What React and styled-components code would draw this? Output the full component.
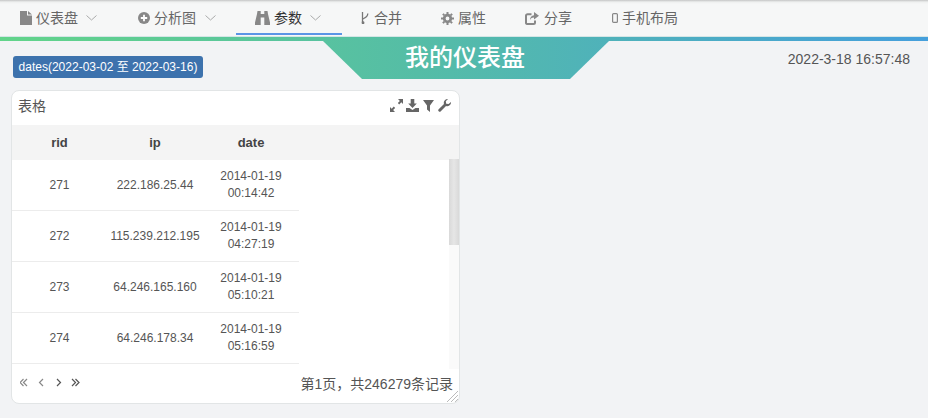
import React from 'react'
import styled, { createGlobalStyle } from 'styled-components'

const FONT = `"Liberation Sans", "Noto Sans CJK SC", sans-serif`
const GRADIENT = 'linear-gradient(90deg, #62d48a 0%, #55bda6 45%, #459fdc 100%)'

const GlobalStyle = createGlobalStyle`
  html, body { margin: 0; padding: 0; background: #f2f3f5; }
  body { font-family: ${FONT}; color: #555; width: 928px; height: 418px; overflow: hidden; }
`

const Nav = styled.nav`
  height: 36px;
  box-sizing: border-box;
  padding-top: 3px;
  display: flex;
  background: linear-gradient(180deg, #c4c5c5 0, #eef0ef 2px, #f6f7f7 4px);
`

const NavItem = styled.div`
  width: ${p => p.$w}px;
  flex: none;
  box-sizing: border-box;
  height: 32px;
  padding-left: ${p => p.$pl}px;
  padding-bottom: 2px;
  display: flex;
  align-items: center;
  gap: ${p => p.$gap ?? 4}px;
  font-size: 14px;
  color: ${p => (p.$active ? '#333' : '#666')};
  border-bottom: 2px solid ${p => (p.$active ? '#5b95e6' : 'transparent')};
  svg { flex: none; margin-top: 2px; }
`

const Caret = styled.svg`
  width: 11px;
  height: 6px;
  margin-left: ${p => p.$ml}px;
  fill: none;
  stroke: #aaa;
  stroke-width: 1;
`

const Strip = styled.div`
  height: 5px;
  background: ${GRADIENT};
  border-top: 1px solid #d5e6e6;
  box-sizing: border-box;
`

const Head = styled.header`
  display: grid;
  grid-template-columns: 323px 286px 1fr;
  height: 49px;
`

const Tag = styled.div`
  align-self: start;
  justify-self: start;
  margin: 15px 0 0 13px;
  height: 22px;
  width: 190px;
  box-sizing: border-box;
  background: #3d72ad;
  border-radius: 3px;
  color: #fff;
  font-size: 12px;
  line-height: 22px;
  text-align: center;
  white-space: nowrap;
`

const Banner = styled.h1`
  margin: 0;
  height: 38px;
  background: ${GRADIENT};
  background-size: 928px 100%;
  background-position: -323px 0;
  clip-path: polygon(0 0, 286px 0, 247px 100%, 39px 100%);
  color: #fff;
  font-size: 24px;
  font-weight: 500;
  line-height: 33px;
  text-align: center;
  padding-right: 2px;
  box-sizing: border-box;
`

const Clock = styled.div`
  justify-self: end;
  margin: 9px 18px 0 0;
  font-size: 14px;
  line-height: 18px;
  color: #555;
`

const Panel = styled.section`
  width: 449px;
  height: 314px;
  margin-left: 11px;
  box-sizing: border-box;
  background: #fff;
  border: 1px solid #e2e5e6;
  border-radius: 8px;
  overflow: hidden;
  display: flex;
  flex-direction: column;
`

const PanelTop = styled.div`
  height: 34px;
  flex: none;
  box-sizing: border-box;
  display: flex;
  align-items: center;
  justify-content: space-between;
  padding: 0 7px 7px 6px;
  font-size: 14px;
  color: #555;
`

const Tools = styled.div`
  display: flex;
  gap: 3px;
  margin: 0 1px -2px 0;
  svg { width: 13px; height: 13px; fill: #666; display: block; }
`

const Columns = styled.div`
  display: grid;
  grid-template-columns: 95px 96px 96px;
  width: 287px;
`

const HeadRow = styled.div`
  height: 35px;
  flex: none;
  background: #f4f4f4;
`

const Th = styled.div`
  height: 35px;
  line-height: 36px;
  text-align: center;
  font-size: 13px;
  font-weight: bold;
  color: #444;
`

const Body = styled.div`
  height: 204px;
  flex: none;
  display: flex;
  justify-content: space-between;
`

const Rows = styled.div`
  width: 287px;
`

const Row = styled(Columns)`
  height: 51px;
  box-sizing: border-box;
  border-bottom: 1px solid #ececec;
  align-items: center;
  text-align: center;
  font-size: 12px;
  line-height: 17px;
  color: #555;
`

const Track = styled.div`
  width: 10px;
  height: 210px;
  margin-top: -1px;
  background: #fafafa;
`

const Thumb = styled.div`
  height: 86px;
  background: linear-gradient(90deg, #d9d9d9, #e6e6e6 50%, #d9d9d9);
`

const Foot = styled.div`
  flex: 1;
  display: flex;
  align-items: center;
  justify-content: space-between;
  padding: 0 6px 2px 8px;
  position: relative;
  font-size: 14px;
  color: #555;
`

const Pager = styled.div`
  display: flex;
  gap: 8px;
`

const PageBtn = styled.svg`
  width: 9px;
  height: 9px;
  fill: none;
  stroke: ${p => (p.$off ? '#888' : '#555')};
  stroke-width: 1.2;
`

const Grip = styled.svg`
  position: absolute;
  right: 0;
  bottom: 0;
  width: 13px;
  height: 13px;
  stroke: #bbb;
  stroke-width: 1;
`

const FileIcon = () => (
  <svg width="12" height="14" viewBox="0 0 12 14" fill="#888"><path d="M0 0h7v4.500h5V14H0zM8 0l4 3.500H8z" /></svg>
)
const PlusIcon = () => (
  <svg width="12" height="12" viewBox="0 0 12 12"><circle cx="6" cy="6" r="6" fill="#888" /><path d="M2.800 6h6.400M6 2.800v6.400" stroke="#fff" strokeWidth="1.800" /></svg>
)
const BinocularsIcon = () => (
  <svg width="15" height="14" viewBox="0 0 15 14" fill="#888"><path d="M2.500 0h3.200v3h3.600V0h3.200l.5 3L15 11.500V14H9.300V6.500H5.700V14H0v-2.500L2 3z" /></svg>
)
const MergeIcon = () => (
  <svg width="8" height="12" viewBox="0 0 8 12" fill="none" stroke="#777" strokeWidth="1.300"><path d="M1.500 0v10" /><circle cx="2" cy="10.800" r=".8" /><path d="M6.800 1.500c0 3-1.500 4-5 5.500" /></svg>
)
const GearIcon = () => (
  <svg width="13" height="13" viewBox="0 0 13 13"><circle cx="6.500" cy="6.500" r="3.300" fill="none" stroke="#888" strokeWidth="2.800" /><path d="M6.500 0v2M6.500 11v2M0 6.500h2M11 6.500h2M1.900 1.900l1.400 1.400M9.700 9.700l1.400 1.400M11.100 1.900L9.700 3.300M3.300 9.700l-1.400 1.400" stroke="#888" strokeWidth="2" /></svg>
)
const ShareIcon = () => (
  <svg width="14" height="13" viewBox="0 0 14 13" fill="none"><path d="M6.500 2.300H2.500a1.500 1.500 0 0 0-1.500 1.500v7A1.200 1.200 0 0 0 2.500 12h6a1.500 1.500 0 0 0 1.500-1.500V8.500" stroke="#888" strokeWidth="2" /><path d="M9 0l5 3.700-5 3.800V5.500C7 5.500 5.800 6.300 5 8c0-2.500 1.500-4.500 4-4.800z" fill="#888" /></svg>
)
const PhoneIcon = () => (
  <svg width="6" height="10" viewBox="0 0 6 10" fill="none"><rect x=".6" y=".6" width="4.800" height="8.800" rx="1" stroke="#888" strokeWidth="1.200" /></svg>
)

const ChevronDown = ({ ml }) => (
  <Caret $ml={ml} viewBox="0 0 11 6"><path d="M.5.500L5.500 5l5-4.500" /></Caret>
)

const rows = [
  ['271', '222.186.25.44', '2014-01-19', '00:14:42'],
  ['272', '115.239.212.195', '2014-01-19', '04:27:19'],
  ['273', '64.246.165.160', '2014-01-19', '05:10:21'],
  ['274', '64.246.178.34', '2014-01-19', '05:16:59'],
]

export default function App() {
  return (
    <>
      <GlobalStyle />
      <Nav>
        <NavItem $w={118} $pl={20}><FileIcon />仪表盘<ChevronDown ml={4} /></NavItem>
        <NavItem $w={118} $pl={20}><PlusIcon />分析图<ChevronDown ml={5} /></NavItem>
        <NavItem $active $w={106} $pl={19}><BinocularsIcon />参数<ChevronDown ml={4} /></NavItem>
        <NavItem $w={84} $pl={19} $gap={5}><MergeIcon />合并</NavItem>
        <NavItem $w={84} $pl={15}><GearIcon />属性</NavItem>
        <NavItem $w={85} $pl={15} $gap={5}><ShareIcon />分享</NavItem>
        <NavItem $w={90} $pl={17}><PhoneIcon />手机布局</NavItem>
      </Nav>
      <Strip />
      <Head>
        <Tag>dates(2022-03-02 至 2022-03-16)</Tag>
        <Banner>我的仪表盘</Banner>
        <Clock>2022-3-18 16:57:48</Clock>
      </Head>
      <Panel>
        <PanelTop>
          表格
          <Tools>
            <svg viewBox="0 0 13 13"><path d="M8 0h5v5l-1.700-1.700-2.100 2.100-1.400-1.400 2.100-2.100zM5 13H0V8l1.700 1.700 2.100-2.100 1.400 1.400-2.100 2.100z" /></svg>
            <svg viewBox="0 0 13 13"><path d="M4.700 0h3.600v4.500h2.500L6.500 9 2.200 4.500h2.500zM0 9h3.500l3 2 3-2H13v4H0z" /></svg>
            <svg viewBox="0 0 13 13"><path d="M1 1h11L8 6.500V13l-3-2.500v-4z" /></svg>
            <svg viewBox="0 0 13 13"><path d="M13 3a3.800 3.800 0 0 1-5 4L2.800 12.300a1.300 1.300 0 0 1-2.100-2.100L6 5a3.800 3.800 0 0 1 4-5L7.800 2.300l.4 2.400 2.400.4z" /></svg>
          </Tools>
        </PanelTop>
        <HeadRow>
          <Columns>
            <Th>rid</Th>
            <Th>ip</Th>
            <Th>date</Th>
          </Columns>
        </HeadRow>
        <Body>
          <Rows>
            {rows.map(r => (
              <Row key={r[0]}>
                <div>{r[0]}</div>
                <div>{r[1]}</div>
                <div>{r[2]}<br />{r[3]}</div>
              </Row>
            ))}
          </Rows>
          <Track><Thumb /></Track>
        </Body>
        <Foot>
          <Pager>
            <PageBtn $off viewBox="0 0 9 9"><path d="M3.500 1L0 4.500 3.500 8M7 1L3.500 4.500 7 8" /></PageBtn>
            <PageBtn $off viewBox="0 0 9 9"><path d="M6 1L2.500 4.500 6 8" /></PageBtn>
            <PageBtn viewBox="0 0 9 9"><path d="M3 1l3.500 3.500L3 8" /></PageBtn>
            <PageBtn viewBox="0 0 9 9"><path d="M1 1l3.500 3.500L1 8M4.500 1L8 4.500 4.500 8" /></PageBtn>
          </Pager>
          第1页，共246279条记录
          <Grip viewBox="0 0 13 13"><path d="M1 12L12 1M5 12l7-7M9 12l3-3" /></Grip>
        </Foot>
      </Panel>
    </>
  )
}
